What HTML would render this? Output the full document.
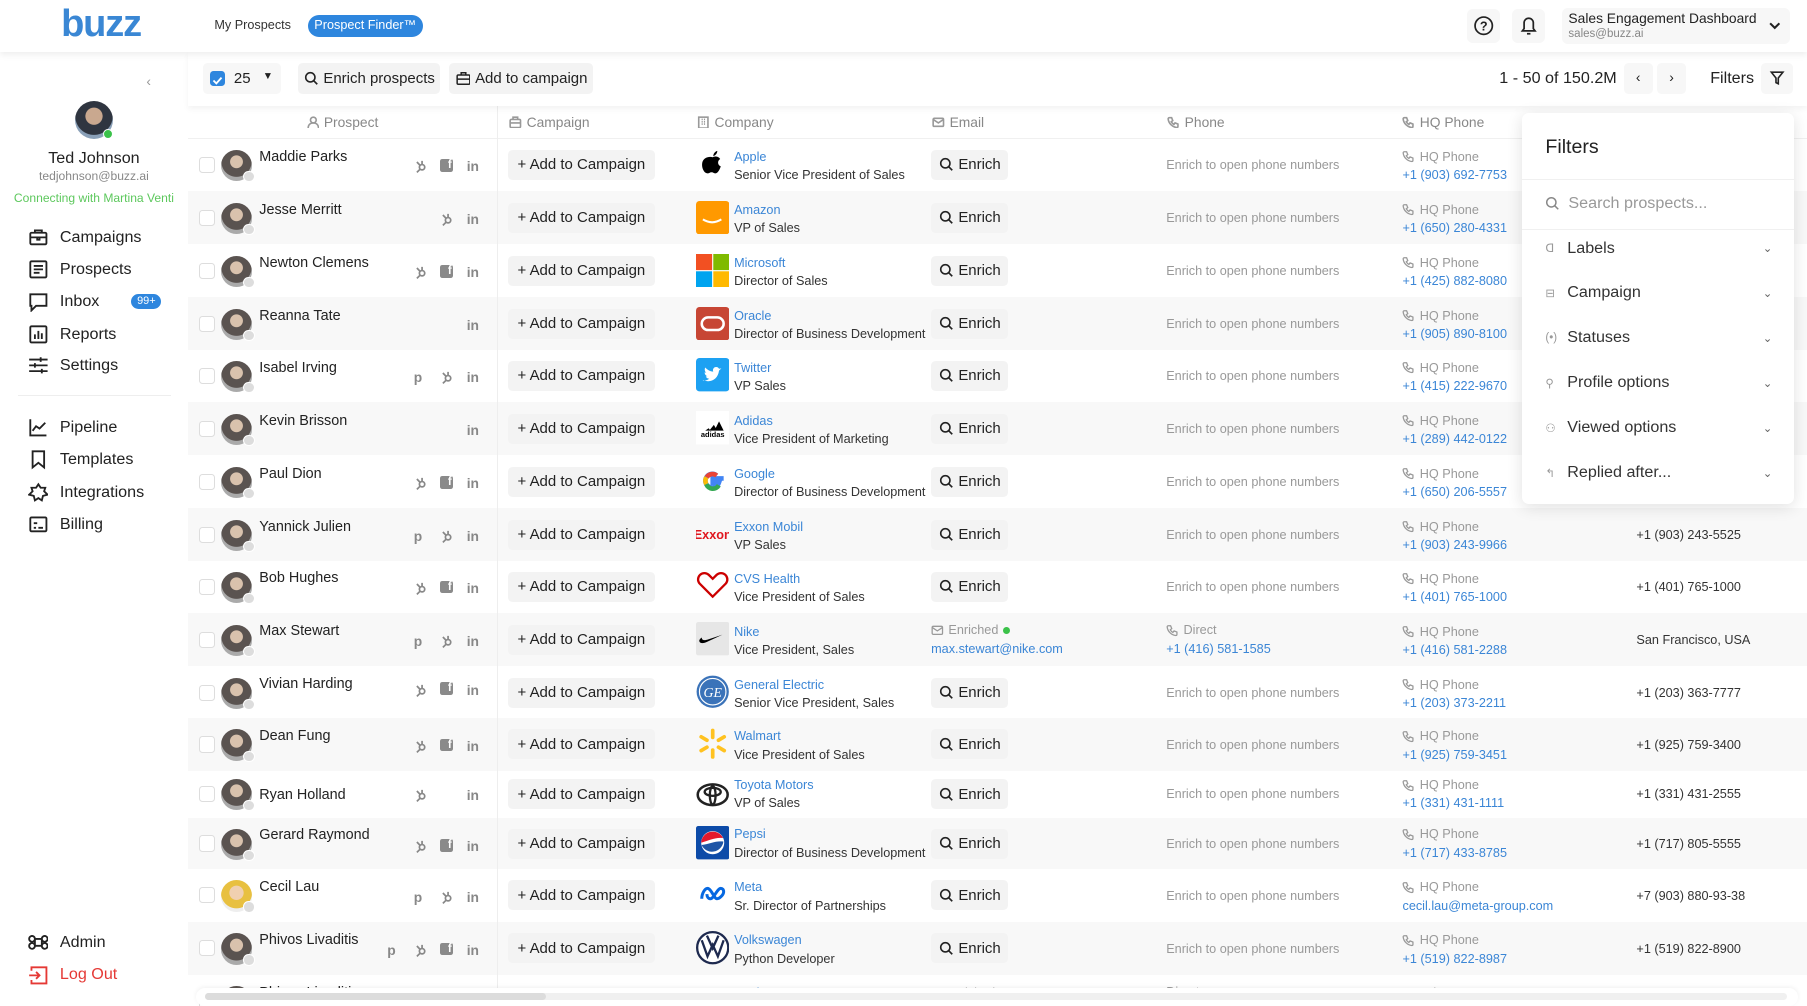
<!DOCTYPE html>
<html><head><meta charset="utf-8">
<style>
*{box-sizing:border-box;margin:0;padding:0}
html,body{width:1807px;height:1006px;overflow:hidden;background:#fff}
#w{width:1568px;height:873px;zoom:1.15242;position:relative;overflow:hidden;font-family:"Liberation Sans",Arial,sans-serif;color:#222;background:#fff}
.a{position:absolute}
.hdr{left:0;top:0;width:1568px;height:45px;background:#fff;box-shadow:0 2px 6px rgba(0,0,0,.08);z-index:5}
.logo{left:53px;top:3px;font-size:33px;font-weight:bold;color:#3a87d4;letter-spacing:-1px}
.side{left:0;top:45px;width:163px;height:828px;background:#fff}
.nav{left:24px;font-size:14px;color:#222;display:flex;align-items:center}
.nav svg{width:18px;height:18px;margin-right:10px;stroke:#222;fill:none;stroke-width:1.6}
.btn{background:#f3f3f3;border-radius:4px;font-size:13px;color:#222;display:flex;align-items:center;justify-content:center}
.row{position:absolute;left:163px;width:1405px;height:46px}
.row.g{background:#f8f8f8}
.row>*{position:absolute}
.cb{left:10px;top:16px;width:14px;height:14px;border:1px solid #ddd;border-radius:3px;background:#fff}
.av{left:29px;top:10px;width:27px;height:27px;border-radius:50%;background:radial-gradient(circle at 50% 38%,#d9c2ad 0 25%,#5a5350 27% 60%,#aaa 62%)}
.av:after{content:"";position:absolute;right:-2px;bottom:-1px;width:8px;height:8px;border-radius:50%;background:#ddd;border:1.5px solid #fff}
.nm{left:62px;top:9px;font-size:12.5px;color:#222}
.ic{top:17px;font-size:12px;color:#888;font-weight:bold}
.s0{left:173px}.s1{left:196px}.s2{left:219px}
.ic.in{left:242px}
.fb{width:11px;height:11px;background:#8a8a8a;border-radius:2px;top:18px;color:#fff;font-size:10px;line-height:12px;text-align:right;padding-right:1px;overflow:hidden}
.cp{left:278px;top:10px;width:127px;height:26px}
.lg{left:441px;top:8px;width:29px;height:29px}
.cn{left:474px;top:10px;font-size:11px;color:#3b86d6;white-space:nowrap}
.ct{left:474px;top:26px;font-size:11px;color:#333;white-space:nowrap}
.en{left:645px;top:10px;width:67px;height:26px}
.ph{left:849px;top:17px;font-size:11px;color:#999}
.hq1{left:1054px;top:10px;font-size:11px;color:#999;display:flex;align-items:center}
.hq2{left:1054px;top:26px;font-size:11px;color:#3b86d6}
.lc{left:1257px;top:17px;font-size:11px;color:#333}
.th{top:99px;font-size:12px;color:#888;display:flex;align-items:center}
.th svg{width:11px;height:11px;margin-right:4px;stroke:#999;fill:none;stroke-width:1.4}
.fl{left:1341px;font-size:14px;color:#333;display:flex;align-items:center;width:197px;z-index:7}
.fl i{font-style:normal;color:#999;font-size:10px;width:19px}
.fl b{font-weight:normal;margin-left:auto;color:#666;font-size:10px}
</style></head><body><div id="w">

<div class="a hdr">
 <div class="a logo">buzz</div>
 <div class="a" style="left:186px;top:16px;font-size:11px;color:#333">My Prospects</div>
 <div class="a" style="left:267px;top:13px;width:100px;height:19px;border-radius:10px;background:#2e86de;color:#fff;font-size:11px;text-align:center;line-height:19px">Prospect Finder™</div>
 <div class="a" style="left:1273px;top:8px;width:29px;height:29px;background:#f7f7f7;border-radius:5px"><svg width="29" height="29"><circle cx="14.5" cy="14.5" r="7.5" fill="none" stroke="#222" stroke-width="1.5"/><text x="14.5" y="18.5" font-size="11" text-anchor="middle" font-family="Liberation Sans" font-weight="bold" fill="#222">?</text></svg></div>
 <div class="a" style="left:1312px;top:8px;width:29px;height:29px;background:#f7f7f7;border-radius:5px"><svg width="29" height="29" fill="none" stroke="#222" stroke-width="1.5"><path d="M9 19h11l-1.5-2v-5a4 4 0 0 0-8 0v5z M13 21.5h3"/></svg></div>
 <div class="a" style="left:1355px;top:7px;width:198px;height:31px;background:#f7f7f7;border-radius:5px">
  <div class="a" style="left:6px;top:2px;font-size:12px;color:#222">Sales Engagement Dashboard</div>
  <div class="a" style="left:6px;top:17px;font-size:10px;color:#888">sales@buzz.ai</div>
  <svg class="a" style="left:180px;top:11px" width="10" height="8"><path d="M1 2l4 4 4-4" stroke="#222" stroke-width="1.8" fill="none"/></svg>
 </div>
</div>

<div class="a side">
 <div class="a" style="left:127px;top:18px;color:#999;font-size:12px">‹</div>
 <div class="a" style="left:65px;top:43px;width:33px;height:33px;border-radius:50%;background:radial-gradient(circle at 50% 40%,#c9a88f 0 28%,#2f3540 30% 62%,#8aa0b8 64%)"></div>
 <div class="a" style="left:89px;top:67px;width:9px;height:9px;border-radius:50%;background:#3bc24a;border:1.5px solid #fff"></div>
 <div class="a" style="left:0;width:163px;top:84px;text-align:center;font-size:14px;color:#222">Ted Johnson</div>
 <div class="a" style="left:0;width:163px;top:102px;text-align:center;font-size:10.5px;color:#888">tedjohnson@buzz.ai</div>
 <div class="a" style="left:0;width:163px;top:121px;text-align:center;font-size:10.5px;color:#5dc85d">Connecting with Martina Venti</div>
 <div class="a nav" style="top:152px"><svg viewBox="0 0 18 18"><rect x="2" y="5" width="14" height="10" rx="1"/><path d="M6 5V3h6v2M2 9h14M8 9v2h2V9"/></svg>Campaigns</div>
 <div class="a nav" style="top:180px"><svg viewBox="0 0 18 18"><rect x="2" y="2" width="14" height="14" rx="1"/><path d="M5 6h8M5 9h8M5 12h5"/></svg>Prospects</div>
 <div class="a nav" style="top:208px"><svg viewBox="0 0 18 18"><path d="M2 2h14v10H7l-4 4v-4H2z"/></svg>Inbox</div>
 <div class="a" style="left:114px;top:210px;width:26px;height:13px;border-radius:7px;background:#2e86de;color:#fff;font-size:9.5px;text-align:center;line-height:13px">99+</div>
 <div class="a nav" style="top:236px"><svg viewBox="0 0 18 18"><rect x="2" y="2" width="14" height="14" rx="1"/><path d="M6 13V9M9 13V6M12 13V8"/></svg>Reports</div>
 <div class="a nav" style="top:263px"><svg viewBox="0 0 18 18"><path d="M1 4h16M1 9h16M1 14h16M11 2v4M6 7v4M12 12v4"/></svg>Settings</div>
 <div class="a" style="left:16px;top:298px;width:132px;height:1px;background:#eee"></div>
 <div class="a nav" style="top:317px"><svg viewBox="0 0 18 18"><path d="M2 2v14h14M4 12l3-4 3 2 5-5"/></svg>Pipeline</div>
 <div class="a nav" style="top:345px"><svg viewBox="0 0 18 18"><path d="M4 2h10v14l-5-4-5 4z"/></svg>Templates</div>
 <div class="a nav" style="top:373px"><svg viewBox="0 0 18 18"><path d="M9 2l2 3 4 0-1 3 3 3-4 1-1 4-3-2-3 2-1-4-4-1 3-3-1-3 4 0z"/></svg>Integrations</div>
 <div class="a nav" style="top:401px"><svg viewBox="0 0 18 18"><rect x="2" y="3" width="14" height="12" rx="1"/><path d="M5 8h3M5 12h2M9 12h4"/></svg>Billing</div>
 <div class="a nav" style="top:764px"><svg viewBox="0 0 18 18"><path d="M6 6h6v6H6zM6 6a2.5 2.5 0 1 1 0-.1M12 6a2.5 2.5 0 1 0 0-.1M6 12a2.5 2.5 0 1 0 0 .1M12 12a2.5 2.5 0 1 1 0 .1"/></svg>Admin</div>
 <div class="a nav" style="top:792px;color:#e53935"><svg viewBox="0 0 18 18" style="stroke:#e53935"><path d="M3 5V2h13v14H3v-3M1 9h9M7 6l3 3-3 3"/></svg>Log Out</div>
</div>

<!-- toolbar -->
<div class="a" style="left:163px;top:45px;width:1405px;height:47px;background:#fff;box-shadow:0 3px 5px rgba(0,0,0,.05);z-index:3">
 <div class="a" style="left:13px;top:10px;width:68px;height:27px;background:#f7f7f7;border-radius:4px">
  <div class="a" style="left:6px;top:7px;width:13px;height:13px;border-radius:3px;background:#2e86de"><svg width="13" height="13"><path d="M3 6.5l2.5 2.5 4.5-5" stroke="#fff" stroke-width="1.6" fill="none"/></svg></div>
  <div class="a" style="left:27px;top:6px;font-size:13px">25</div>
  <div class="a" style="left:52px;top:7px;font-size:9px">▼</div>
 </div>
 <div class="a btn" style="left:96px;top:10px;width:123px;height:27px">
  <svg width="13" height="13" style="margin-right:4px"><circle cx="5.5" cy="5.5" r="4" stroke="#222" stroke-width="1.4" fill="none"/><path d="M8.5 8.5l3 3" stroke="#222" stroke-width="1.4"/></svg>Enrich prospects</div>
 <div class="a btn" style="left:227px;top:10px;width:125px;height:27px">
  <svg width="13" height="13" style="margin-right:4px" fill="none" stroke="#222" stroke-width="1.3"><rect x="1" y="3.5" width="11" height="8" rx="1"/><path d="M4.5 3.5V1.5h4v2M1 7h11"/></svg>Add to campaign</div>
 <div class="a" style="left:1138px;top:15px;font-size:14px;color:#222">1 - 50 of 150.2M</div>
 <div class="a" style="left:1246px;top:10px;width:25px;height:27px;background:#f7f7f7;border-radius:4px;text-align:center;line-height:26px;font-size:12px">‹</div>
 <div class="a" style="left:1275px;top:10px;width:25px;height:27px;background:#f7f7f7;border-radius:4px;text-align:center;line-height:26px;font-size:12px">›</div>
 <div class="a" style="left:1321px;top:15px;font-size:14px;color:#222">Filters</div>
 <div class="a" style="left:1365px;top:10px;width:28px;height:27px;background:#f7f7f7;border-radius:4px"><svg width="28" height="27"><path d="M9 8h10l-4 5v5l-2-1v-4z" stroke="#222" stroke-width="1.4" fill="none"/></svg></div>
</div>

<!-- table header -->
<div class="a" style="left:163px;top:120px;width:1405px;height:1px;background:#f0f0f0"></div>
<div class="a" style="left:431px;top:92px;width:1px;height:781px;background:#eee;z-index:2"></div>
<div class="a th" style="left:266px"><svg viewBox="0 0 11 11"><circle cx="5.5" cy="3.5" r="2.5"/><path d="M1 10.5c0-3 2-4.5 4.5-4.5s4.5 1.5 4.5 4.5"/></svg>Prospect</div>
<div class="a th" style="left:442px"><svg viewBox="0 0 11 11"><rect x="1" y="3" width="9" height="7" rx="1"/><path d="M3.5 3V1h4v2M1 6h9"/></svg>Campaign</div>
<div class="a th" style="left:605px"><svg viewBox="0 0 11 11"><rect x="1.5" y="1" width="8" height="9.5"/><path d="M4 3h1M6 3h1M4 5h1M6 5h1M4 7h1M6 7h1"/></svg>Company</div>
<div class="a th" style="left:809px"><svg viewBox="0 0 11 11"><rect x="1" y="2" width="9" height="7" rx="1"/><path d="M1 3l4.5 3 4.5-3"/></svg>Email</div>
<div class="a th" style="left:1013px"><svg viewBox="0 0 11 11"><path d="M2 1.5l2 0 1 2.5-1.3 1a6 6 0 0 0 2.3 2.3l1-1.3 2.5 1v2a1 1 0 0 1-1 1A8.5 8.5 0 0 1 1 2.5a1 1 0 0 1 1-1z"/></svg>Phone</div>
<div class="a th" style="left:1217px"><svg viewBox="0 0 11 11"><path d="M2 1.5l2 0 1 2.5-1.3 1a6 6 0 0 0 2.3 2.3l1-1.3 2.5 1v2a1 1 0 0 1-1 1A8.5 8.5 0 0 1 1 2.5a1 1 0 0 1 1-1z"/></svg>HQ Phone</div>

<svg width="0" height="0" style="position:absolute"><defs>
<g id="hs"><circle cx="7" cy="8" r="2.3" fill="none" stroke="#888" stroke-width="1.5"/><path d="M7 5.7V2.5M5.4 9.6L2.5 12.5M5.3 6.4L2.5 3.5" stroke="#888" stroke-width="1.5" fill="none"/></g>
<g id="ph"><path d="M2 1.5l2 0 1 2.5-1.3 1a6 6 0 0 0 2.3 2.3l1-1.3 2.5 1v2a1 1 0 0 1-1 1A8.5 8.5 0 0 1 1 2.5a1 1 0 0 1 1-1z" fill="none" stroke="#999" stroke-width="1.1"/></g>
</defs></svg>

<!-- ROWS -->
<div class="row" style="top:120px"><div class="cb"></div><div class="av"></div><div class="nm">Maddie Parks</div>
<svg class="ic s1" width="14" height="14"><use href="#hs"/></svg><div class="ic fb s2">f</div><div class="ic in">in</div>
<div class="cp btn">+ Add to Campaign</div>
<svg class="lg" viewBox="0 0 29 29"><path d="M14.5 8c2-1 5-1 6.5 1.5-2.5 1.5-2.5 5 .5 6.5-.8 2.5-2.5 6-4.5 6-1.5 0-2-1-3.5-1s-2 1-3.5 1C7 22 4.5 17 5.5 12.5 6.5 8.5 11 7 14.5 8z" fill="#000"/><path d="M15 7c0-2 1.5-4 3.5-4.5 0 2-1.5 4-3.5 4.5z" fill="#000"/></svg>
<div class="cn">Apple</div><div class="ct">Senior Vice President of Sales</div>
<div class="en btn"><svg width="13" height="13" style="margin-right:4px"><circle cx="5.5" cy="5.5" r="4" stroke="#222" stroke-width="1.4" fill="none"/><path d="M8.5 8.5l3 3" stroke="#222" stroke-width="1.4"/></svg>Enrich</div>
<div class="ph">Enrich to open phone numbers</div>
<div class="hq1"><svg width="11" height="11" style="margin-right:4px"><use href="#ph"/></svg>HQ Phone</div><div class="hq2">+1 (903) 692-7753</div></div>

<div class="row g" style="top:166px"><div class="cb"></div><div class="av"></div><div class="nm">Jesse Merritt</div>
<svg class="ic s2" width="14" height="14"><use href="#hs"/></svg><div class="ic in">in</div>
<div class="cp btn">+ Add to Campaign</div>
<svg class="lg" viewBox="0 0 29 29"><rect width="29" height="29" rx="3" fill="#ff9900"/><path d="M6 16q8 5 16 0" stroke="#fff" stroke-width="1.8" fill="none"/></svg>
<div class="cn">Amazon</div><div class="ct">VP of Sales</div>
<div class="en btn"><svg width="13" height="13" style="margin-right:4px"><circle cx="5.5" cy="5.5" r="4" stroke="#222" stroke-width="1.4" fill="none"/><path d="M8.5 8.5l3 3" stroke="#222" stroke-width="1.4"/></svg>Enrich</div>
<div class="ph">Enrich to open phone numbers</div>
<div class="hq1"><svg width="11" height="11" style="margin-right:4px"><use href="#ph"/></svg>HQ Phone</div><div class="hq2">+1 (650) 280-4331</div></div>

<div class="row" style="top:212px"><div class="cb"></div><div class="av"></div><div class="nm">Newton Clemens</div>
<svg class="ic s1" width="14" height="14"><use href="#hs"/></svg><div class="ic fb s2">f</div><div class="ic in">in</div>
<div class="cp btn">+ Add to Campaign</div>
<svg class="lg" viewBox="0 0 29 29"><rect x="0" y="0" width="14" height="14" fill="#f25022"/><rect x="15" y="0" width="14" height="14" fill="#7fba00"/><rect x="0" y="15" width="14" height="14" fill="#00a4ef"/><rect x="15" y="15" width="14" height="14" fill="#ffb900"/></svg>
<div class="cn">Microsoft</div><div class="ct">Director of Sales</div>
<div class="en btn"><svg width="13" height="13" style="margin-right:4px"><circle cx="5.5" cy="5.5" r="4" stroke="#222" stroke-width="1.4" fill="none"/><path d="M8.5 8.5l3 3" stroke="#222" stroke-width="1.4"/></svg>Enrich</div>
<div class="ph">Enrich to open phone numbers</div>
<div class="hq1"><svg width="11" height="11" style="margin-right:4px"><use href="#ph"/></svg>HQ Phone</div><div class="hq2">+1 (425) 882-8080</div></div>

<div class="row g" style="top:258px"><div class="cb"></div><div class="av"></div><div class="nm">Reanna Tate</div>
<div class="ic in">in</div>
<div class="cp btn">+ Add to Campaign</div>
<svg class="lg" viewBox="0 0 29 29"><rect width="29" height="29" rx="3" fill="#c74634"/><rect x="5" y="9" width="19" height="11" rx="5.5" stroke="#fff" stroke-width="2.2" fill="none"/></svg>
<div class="cn">Oracle</div><div class="ct">Director of Business Development</div>
<div class="en btn"><svg width="13" height="13" style="margin-right:4px"><circle cx="5.5" cy="5.5" r="4" stroke="#222" stroke-width="1.4" fill="none"/><path d="M8.5 8.5l3 3" stroke="#222" stroke-width="1.4"/></svg>Enrich</div>
<div class="ph">Enrich to open phone numbers</div>
<div class="hq1"><svg width="11" height="11" style="margin-right:4px"><use href="#ph"/></svg>HQ Phone</div><div class="hq2">+1 (905) 890-8100</div></div>

<div class="row" style="top:303px"><div class="cb"></div><div class="av"></div><div class="nm">Isabel Irving</div>
<div class="ic s1">p</div><svg class="ic s2" width="14" height="14"><use href="#hs"/></svg><div class="ic in">in</div>
<div class="cp btn">+ Add to Campaign</div>
<svg class="lg" viewBox="0 0 29 29"><rect width="29" height="29" rx="3" fill="#1da1f2"/><path d="M6 19c6 3 13 0 14-8l2-2-2 .3c-1-2-4-2-5 0-.5 1-.3 2 0 2.5-3 0-5-1.5-7-3.5-1 2 0 4 1 4.5l-1.5-.3c0 1.5 1 3 2.5 3.3l-1.5.2c.5 1.3 1.7 2 3 2-1.5 1.2-3.5 1.8-5.5 1.5z" fill="#fff"/></svg>
<div class="cn">Twitter</div><div class="ct">VP Sales</div>
<div class="en btn"><svg width="13" height="13" style="margin-right:4px"><circle cx="5.5" cy="5.5" r="4" stroke="#222" stroke-width="1.4" fill="none"/><path d="M8.5 8.5l3 3" stroke="#222" stroke-width="1.4"/></svg>Enrich</div>
<div class="ph">Enrich to open phone numbers</div>
<div class="hq1"><svg width="11" height="11" style="margin-right:4px"><use href="#ph"/></svg>HQ Phone</div><div class="hq2">+1 (415) 222-9670</div></div>

<div class="row g" style="top:349px"><div class="cb"></div><div class="av"></div><div class="nm">Kevin Brisson</div>
<div class="ic in">in</div>
<div class="cp btn">+ Add to Campaign</div>
<svg class="lg" viewBox="0 0 29 29"><rect width="29" height="29" fill="#fff"/><path d="M8 17l3-2 1.5 2zM11.5 17l4-5 3 5zM16 17l4-8 4 8z" fill="#000"/><text x="14.5" y="22.5" font-size="6.5" font-weight="bold" text-anchor="middle" font-family="Liberation Sans">adidas</text></svg>
<div class="cn">Adidas</div><div class="ct">Vice President of Marketing</div>
<div class="en btn"><svg width="13" height="13" style="margin-right:4px"><circle cx="5.5" cy="5.5" r="4" stroke="#222" stroke-width="1.4" fill="none"/><path d="M8.5 8.5l3 3" stroke="#222" stroke-width="1.4"/></svg>Enrich</div>
<div class="ph">Enrich to open phone numbers</div>
<div class="hq1"><svg width="11" height="11" style="margin-right:4px"><use href="#ph"/></svg>HQ Phone</div><div class="hq2">+1 (289) 442-0122</div></div>

<div class="row" style="top:395px"><div class="cb"></div><div class="av"></div><div class="nm">Paul Dion</div>
<svg class="ic s1" width="14" height="14"><use href="#hs"/></svg><div class="ic fb s2">f</div><div class="ic in">in</div>
<div class="cp btn">+ Add to Campaign</div>
<svg class="lg" viewBox="0 0 29 29"><path d="M24 12.5H14.5v4h5.3a6 6 0 1 1-1.8-6.5" fill="none" stroke="#4285f4" stroke-width="4"/><path d="M18 10a6 6 0 0 0-8.7 1.5" fill="none" stroke="#ea4335" stroke-width="4"/><path d="M9 11.5a6 6 0 0 0 0 6" fill="none" stroke="#fbbc05" stroke-width="4"/><path d="M9 17.5a6 6 0 0 0 10.8 1" fill="none" stroke="#34a853" stroke-width="4"/></svg>
<div class="cn">Google</div><div class="ct">Director of Business Development</div>
<div class="en btn"><svg width="13" height="13" style="margin-right:4px"><circle cx="5.5" cy="5.5" r="4" stroke="#222" stroke-width="1.4" fill="none"/><path d="M8.5 8.5l3 3" stroke="#222" stroke-width="1.4"/></svg>Enrich</div>
<div class="ph">Enrich to open phone numbers</div>
<div class="hq1"><svg width="11" height="11" style="margin-right:4px"><use href="#ph"/></svg>HQ Phone</div><div class="hq2">+1 (650) 206-5557</div></div>

<div class="row g" style="top:441px"><div class="cb"></div><div class="av"></div><div class="nm">Yannick Julien</div>
<div class="ic s1">p</div><svg class="ic s2" width="14" height="14"><use href="#hs"/></svg><div class="ic in">in</div>
<div class="cp btn">+ Add to Campaign</div>
<svg class="lg" viewBox="0 0 29 29"><text x="14.5" y="19" font-size="11" font-weight="bold" fill="#e0161e" text-anchor="middle" font-family="Liberation Sans">Exxon</text></svg>
<div class="cn">Exxon Mobil</div><div class="ct">VP Sales</div>
<div class="en btn"><svg width="13" height="13" style="margin-right:4px"><circle cx="5.5" cy="5.5" r="4" stroke="#222" stroke-width="1.4" fill="none"/><path d="M8.5 8.5l3 3" stroke="#222" stroke-width="1.4"/></svg>Enrich</div>
<div class="ph">Enrich to open phone numbers</div>
<div class="hq1"><svg width="11" height="11" style="margin-right:4px"><use href="#ph"/></svg>HQ Phone</div><div class="hq2">+1 (903) 243-9966</div><div class="lc">+1 (903) 243-5525</div></div>

<div class="row" style="top:486px"><div class="cb"></div><div class="av"></div><div class="nm">Bob Hughes</div>
<svg class="ic s1" width="14" height="14"><use href="#hs"/></svg><div class="ic fb s2">f</div><div class="ic in">in</div>
<div class="cp btn">+ Add to Campaign</div>
<svg class="lg" viewBox="0 0 29 29"><path d="M14.5 24L3 12.5a5.5 5.5 0 0 1 8-7.5l3.5 3.5 3.5-3.5a5.5 5.5 0 0 1 8 7.5z" fill="none" stroke="#cc0000" stroke-width="2"/></svg>
<div class="cn">CVS Health</div><div class="ct">Vice President of Sales</div>
<div class="en btn"><svg width="13" height="13" style="margin-right:4px"><circle cx="5.5" cy="5.5" r="4" stroke="#222" stroke-width="1.4" fill="none"/><path d="M8.5 8.5l3 3" stroke="#222" stroke-width="1.4"/></svg>Enrich</div>
<div class="ph">Enrich to open phone numbers</div>
<div class="hq1"><svg width="11" height="11" style="margin-right:4px"><use href="#ph"/></svg>HQ Phone</div><div class="hq2">+1 (401) 765-1000</div><div class="lc">+1 (401) 765-1000</div></div>

<div class="row g" style="top:532px"><div class="cb"></div><div class="av"></div><div class="nm">Max Stewart</div>
<div class="ic s1">p</div><svg class="ic s2" width="14" height="14"><use href="#hs"/></svg><div class="ic in">in</div>
<div class="cp btn">+ Add to Campaign</div>
<svg class="lg" viewBox="0 0 29 29"><rect width="29" height="29" rx="2" fill="#e6e6e6"/><path d="M3 17c1 2 4 1.5 7 0l13-6-12 4c-3 1-6 1.5-6-1.5-2 1.5-2.5 2.5-2 3.5z" fill="#000"/></svg>
<div class="cn">Nike</div><div class="ct">Vice President, Sales</div>
<div style="left:645px;top:9px;font-size:11px;color:#999;display:flex;align-items:center"><svg width="11" height="11" style="margin-right:4px" fill="none" stroke="#999" stroke-width="1.1"><rect x="1" y="2" width="9" height="7" rx="1"/><path d="M1 3l4.5 3 4.5-3"/></svg>Enriched <span style="display:inline-block;width:6px;height:6px;border-radius:50%;background:#3bc24a;margin-left:4px"></span></div>
<div style="left:645px;top:25px;font-size:11px;color:#3b86d6">max.stewart@nike.com</div>
<div style="left:849px;top:9px;font-size:11px;color:#999;display:flex;align-items:center"><svg width="11" height="11" style="margin-right:4px"><use href="#ph"/></svg>Direct</div>
<div style="left:849px;top:25px;font-size:11px;color:#3b86d6">+1 (416) 581-1585</div>
<div class="hq1"><svg width="11" height="11" style="margin-right:4px"><use href="#ph"/></svg>HQ Phone</div><div class="hq2">+1 (416) 581-2288</div><div class="lc">San Francisco, USA</div></div>

<div class="row" style="top:578px"><div class="cb"></div><div class="av"></div><div class="nm">Vivian Harding</div>
<svg class="ic s1" style="top:14px" width="14" height="14"><use href="#hs"/></svg><div class="ic fb s2" style="top:14px">f</div><div class="ic in" style="top:14px">in</div>
<div class="cp btn">+ Add to Campaign</div>
<svg class="lg" viewBox="0 0 29 29"><circle cx="14.5" cy="14.5" r="14" fill="#3b73b9"/><circle cx="14.5" cy="14.5" r="11.5" fill="none" stroke="#fff" stroke-width="1"/><text x="14.5" y="19" font-size="12" font-style="italic" fill="#fff" text-anchor="middle" font-family="Liberation Serif">GE</text></svg>
<div class="cn">General Electric</div><div class="ct">Senior Vice President, Sales</div>
<div class="en btn"><svg width="13" height="13" style="margin-right:4px"><circle cx="5.5" cy="5.5" r="4" stroke="#222" stroke-width="1.4" fill="none"/><path d="M8.5 8.5l3 3" stroke="#222" stroke-width="1.4"/></svg>Enrich</div>
<div class="ph">Enrich to open phone numbers</div>
<div class="hq1"><svg width="11" height="11" style="margin-right:4px"><use href="#ph"/></svg>HQ Phone</div><div class="hq2">+1 (203) 373-2211</div><div class="lc">+1 (203) 363-7777</div></div>

<div class="row g" style="top:623px"><div class="cb"></div><div class="av"></div><div class="nm">Dean Fung</div>
<svg class="ic s1" width="14" height="14"><use href="#hs"/></svg><div class="ic fb s2">f</div><div class="ic in">in</div>
<div class="cp btn">+ Add to Campaign</div>
<svg class="lg" viewBox="0 0 29 29"><g stroke="#ffc220" stroke-width="3.2" stroke-linecap="round"><path d="M14.5 3v6M14.5 20v6M4.5 8.5l5 3M19.5 17.5l5 3M4.5 20.5l5-3M19.5 11.5l5-3"/></g></svg>
<div class="cn">Walmart</div><div class="ct">Vice President of Sales</div>
<div class="en btn"><svg width="13" height="13" style="margin-right:4px"><circle cx="5.5" cy="5.5" r="4" stroke="#222" stroke-width="1.4" fill="none"/><path d="M8.5 8.5l3 3" stroke="#222" stroke-width="1.4"/></svg>Enrich</div>
<div class="ph">Enrich to open phone numbers</div>
<div class="hq1"><svg width="11" height="11" style="margin-right:4px"><use href="#ph"/></svg>HQ Phone</div><div class="hq2">+1 (925) 759-3451</div><div class="lc">+1 (925) 759-3400</div></div>

<div class="row" style="top:669px;height:41px"><div class="cb" style="top:13px"></div><div class="av" style="top:7px"></div><div class="nm" style="top:14px">Ryan Holland</div>
<svg class="ic s1" style="top:14px" width="14" height="14"><use href="#hs"/></svg><div class="ic in" style="top:14px">in</div>
<div class="cp btn" style="top:7px">+ Add to Campaign</div>
<svg class="lg" style="top:6px" viewBox="0 0 29 29"><ellipse cx="14.5" cy="14.5" rx="13" ry="9" fill="none" stroke="#222" stroke-width="2.2"/><ellipse cx="14.5" cy="12" rx="7" ry="3.5" fill="none" stroke="#222" stroke-width="2"/><ellipse cx="14.5" cy="15" rx="2.5" ry="8" fill="none" stroke="#222" stroke-width="2"/></svg>
<div class="cn" style="top:6px">Toyota Motors</div><div class="ct" style="top:22px">VP of Sales</div>
<div class="en btn" style="top:7px"><svg width="13" height="13" style="margin-right:4px"><circle cx="5.5" cy="5.5" r="4" stroke="#222" stroke-width="1.4" fill="none"/><path d="M8.5 8.5l3 3" stroke="#222" stroke-width="1.4"/></svg>Enrich</div>
<div class="ph" style="top:14px">Enrich to open phone numbers</div>
<div class="hq1" style="top:6px"><svg width="11" height="11" style="margin-right:4px"><use href="#ph"/></svg>HQ Phone</div><div class="hq2" style="top:22px">+1 (331) 431-1111</div><div class="lc" style="top:14px">+1 (331) 431-2555</div></div>

<div class="row g" style="top:710px;height:44px"><div class="cb" style="top:15px"></div><div class="av" style="top:9px"></div><div class="nm" style="top:8px">Gerard Raymond</div>
<svg class="ic s1" width="14" height="14"><use href="#hs"/></svg><div class="ic fb s2">f</div><div class="ic in">in</div>
<div class="cp btn" style="top:9px">+ Add to Campaign</div>
<svg class="lg" style="top:7px" viewBox="0 0 29 29"><rect width="29" height="29" rx="2" fill="#0d4ba8"/><circle cx="14.5" cy="14.5" r="10" fill="#fff"/><path d="M4.5 14.5a10 10 0 0 1 19-4c-6-1-12 2-19 4z" fill="#e3192d"/><path d="M4.8 16.5c7-1 13-4 19-3a10 10 0 0 1-19 3z" fill="#1e55a6"/></svg>
<div class="cn" style="top:8px">Pepsi</div><div class="ct" style="top:24px">Director of Business Development</div>
<div class="en btn" style="top:9px"><svg width="13" height="13" style="margin-right:4px"><circle cx="5.5" cy="5.5" r="4" stroke="#222" stroke-width="1.4" fill="none"/><path d="M8.5 8.5l3 3" stroke="#222" stroke-width="1.4"/></svg>Enrich</div>
<div class="ph" style="top:16px">Enrich to open phone numbers</div>
<div class="hq1" style="top:8px"><svg width="11" height="11" style="margin-right:4px"><use href="#ph"/></svg>HQ Phone</div><div class="hq2" style="top:24px">+1 (717) 433-8785</div><div class="lc" style="top:16px">+1 (717) 805-5555</div></div>

<div class="row" style="top:754px"><div class="cb"></div><div class="av" style="background:radial-gradient(circle at 50% 40%,#f0d0b0 0 28%,#e8c040 30% 62%,#eee 64%)"></div><div class="nm">Cecil Lau</div>
<div class="ic s1">p</div><svg class="ic s2" width="14" height="14"><use href="#hs"/></svg><div class="ic in">in</div>
<div class="cp btn">+ Add to Campaign</div>
<svg class="lg" viewBox="0 0 29 29"><path d="M4 18c0-5 3-9 5-9 3 0 6 9 8 9 3 0 6-4 6-6s-1-3-2.5-3c-3 0-6 9-9 9-2 0-3-2-3-4" fill="none" stroke="#0668e1" stroke-width="2.6" transform="translate(1 0)"/></svg>
<div class="cn">Meta</div><div class="ct">Sr. Director of Partnerships</div>
<div class="en btn"><svg width="13" height="13" style="margin-right:4px"><circle cx="5.5" cy="5.5" r="4" stroke="#222" stroke-width="1.4" fill="none"/><path d="M8.5 8.5l3 3" stroke="#222" stroke-width="1.4"/></svg>Enrich</div>
<div class="ph">Enrich to open phone numbers</div>
<div class="hq1"><svg width="11" height="11" style="margin-right:4px"><use href="#ph"/></svg>HQ Phone</div><div class="hq2">cecil.lau@meta-group.com</div><div class="lc">+7 (903) 880-93-38</div></div>

<div class="row g" style="top:800px"><div class="cb"></div><div class="av"></div><div class="nm">Phivos Livaditis</div>
<div class="ic s0">p</div><svg class="ic s1" width="14" height="14"><use href="#hs"/></svg><div class="ic fb s2">f</div><div class="ic in">in</div>
<div class="cp btn">+ Add to Campaign</div>
<svg class="lg" viewBox="0 0 29 29"><circle cx="14.5" cy="14.5" r="13.5" fill="#fff" stroke="#1e2a4f" stroke-width="2"/><path d="M5 8l5 14 4.5-10 4.5 10 5-14M9.5 4l5 11 5-11" fill="none" stroke="#1e2a4f" stroke-width="2"/></svg>
<div class="cn">Volkswagen</div><div class="ct">Python Developer</div>
<div class="en btn"><svg width="13" height="13" style="margin-right:4px"><circle cx="5.5" cy="5.5" r="4" stroke="#222" stroke-width="1.4" fill="none"/><path d="M8.5 8.5l3 3" stroke="#222" stroke-width="1.4"/></svg>Enrich</div>
<div class="ph">Enrich to open phone numbers</div>
<div class="hq1"><svg width="11" height="11" style="margin-right:4px"><use href="#ph"/></svg>HQ Phone</div><div class="hq2">+1 (519) 822-8987</div><div class="lc">+1 (519) 822-8900</div></div>

<div class="row" style="top:846px"><div class="cb"></div><div class="av"></div><div class="nm">Phivos Livaditis</div>
<div class="cn">Apple</div>
<div style="left:645px;top:9px;font-size:11px;color:#999">✉ Enriched</div>
<div style="left:849px;top:9px;font-size:11px;color:#999">Direct</div>
<div class="hq1">HQ Phone</div></div>

<!-- scrollbar -->
<div class="a" style="left:170px;top:857px;width:1390px;height:16px;background:#fff;border-radius:8px;box-shadow:0 -1px 4px rgba(0,0,0,.06);z-index:4"></div>
<div class="a" style="left:178px;top:862px;width:1373px;height:6px;background:#f0f0f0;border-radius:3px;z-index:4"></div>
<div class="a" style="left:178px;top:862px;width:296px;height:6px;background:#dcdcdc;border-radius:3px;z-index:4"></div>

<!-- filters panel -->
<div class="a" style="left:1321px;top:98px;width:236px;height:339px;background:#fff;border-radius:6px;box-shadow:0 3px 14px rgba(0,0,0,.12);z-index:6">
 <div class="a" style="left:20px;top:20px;font-size:17px;color:#222">Filters</div>
 <div class="a" style="left:0;top:57px;width:236px;height:1px;background:#f0f0f0"></div>
 <div class="a" style="left:20px;top:70px;font-size:14px;color:#999;display:flex;align-items:center"><svg width="13" height="13" style="margin-right:7px"><circle cx="5.5" cy="5.5" r="4" stroke="#888" stroke-width="1.3" fill="none"/><path d="M8.5 8.5l3 3" stroke="#888" stroke-width="1.3"/></svg>Search prospects...</div>
 <div class="a" style="left:0;top:101px;width:236px;height:1px;background:#f0f0f0"></div>
</div>
<div class="a fl" style="top:207px"><i>ᗡ</i>Labels<b>⌄</b></div>
<div class="a fl" style="top:246px"><i>⊟</i>Campaign<b>⌄</b></div>
<div class="a fl" style="top:285px"><i>(•)</i>Statuses<b>⌄</b></div>
<div class="a fl" style="top:324px"><i>⚲</i>Profile options<b>⌄</b></div>
<div class="a fl" style="top:363px"><i>⚇</i>Viewed options<b>⌄</b></div>
<div class="a fl" style="top:402px"><i>↰</i>Replied after...<b>⌄</b></div>
</div>
</body></html>
